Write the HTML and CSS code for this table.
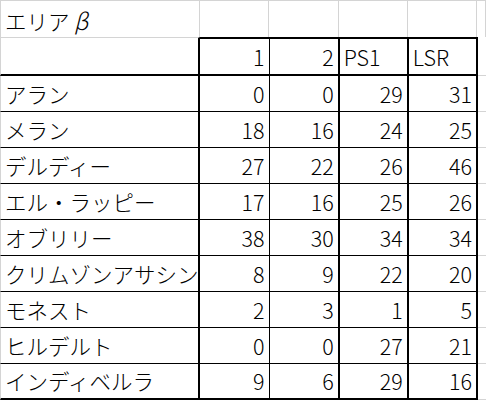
FILE: index.html
```html
<!DOCTYPE html>
<html lang="ja">
<head>
<meta charset="utf-8">
<title>エリアβ</title>
<link rel="stylesheet" href="styles.css">
</head>
<body>
<div class="sheet">
  <div class="row title">
    <div class="cell col-a">エリア<span class="greek">β</span></div>
    <div class="cell col-b"></div>
    <div class="cell col-c"></div>
    <div class="cell col-d"></div>
    <div class="cell col-e"></div>
    <div class="cell col-f"></div>
  </div>
  <div class="row head">
    <div class="cell col-a"></div>
    <div class="cell col-b num">1</div>
    <div class="cell col-c num">2</div>
    <div class="cell col-d">PS1</div>
    <div class="cell col-e">LSR</div>
    <div class="cell col-f"></div>
  </div>
  <div class="row data">
    <div class="cell col-a">アラン</div>
    <div class="cell col-b num">0</div>
    <div class="cell col-c num">0</div>
    <div class="cell col-d num">29</div>
    <div class="cell col-e num">31</div>
    <div class="cell col-f"></div>
  </div>
  <div class="row data">
    <div class="cell col-a">メラン</div>
    <div class="cell col-b num">18</div>
    <div class="cell col-c num">16</div>
    <div class="cell col-d num">24</div>
    <div class="cell col-e num">25</div>
    <div class="cell col-f"></div>
  </div>
  <div class="row data">
    <div class="cell col-a">デルディー</div>
    <div class="cell col-b num">27</div>
    <div class="cell col-c num">22</div>
    <div class="cell col-d num">26</div>
    <div class="cell col-e num">46</div>
    <div class="cell col-f"></div>
  </div>
  <div class="row data">
    <div class="cell col-a">エル・ラッピー</div>
    <div class="cell col-b num">17</div>
    <div class="cell col-c num">16</div>
    <div class="cell col-d num">25</div>
    <div class="cell col-e num">26</div>
    <div class="cell col-f"></div>
  </div>
  <div class="row data">
    <div class="cell col-a">オブリリー</div>
    <div class="cell col-b num">38</div>
    <div class="cell col-c num">30</div>
    <div class="cell col-d num">34</div>
    <div class="cell col-e num">34</div>
    <div class="cell col-f"></div>
  </div>
  <div class="row data">
    <div class="cell col-a">クリムゾンアサシン</div>
    <div class="cell col-b num">8</div>
    <div class="cell col-c num">9</div>
    <div class="cell col-d num">22</div>
    <div class="cell col-e num">20</div>
    <div class="cell col-f"></div>
  </div>
  <div class="row data">
    <div class="cell col-a">モネスト</div>
    <div class="cell col-b num">2</div>
    <div class="cell col-c num">3</div>
    <div class="cell col-d num">1</div>
    <div class="cell col-e num">5</div>
    <div class="cell col-f"></div>
  </div>
  <div class="row data">
    <div class="cell col-a">ヒルデルト</div>
    <div class="cell col-b num">0</div>
    <div class="cell col-c num">0</div>
    <div class="cell col-d num">27</div>
    <div class="cell col-e num">21</div>
    <div class="cell col-f"></div>
  </div>
  <div class="row data last">
    <div class="cell col-a">インディベルラ</div>
    <div class="cell col-b num">9</div>
    <div class="cell col-c num">6</div>
    <div class="cell col-d num">29</div>
    <div class="cell col-e num">16</div>
    <div class="cell col-f"></div>
  </div>
</div>
</body>
</html>
```

FILE: styles.css
```css
html, body {
  margin: 0;
  padding: 0;
  background: #ffffff;
}

body {
  font-family: "Noto Sans CJK JP", "Noto Sans", sans-serif;
  font-size: 21.5px;
  font-weight: 300;
  color: #000000;
}

.sheet {
  width: 486px;
  overflow: hidden;
}

.row {
  display: flex;
}

.cell {
  box-sizing: border-box;
  display: flex;
  align-items: center;
  padding: 0 4px 0 4px;
  white-space: nowrap;
  overflow: hidden;
  line-height: 1;
}

.num {
  justify-content: flex-end;
}

.greek {
  display: inline-block;
  width: 1em;
  text-align: center;
  font-style: italic;
  font-size: 23px;
}

.col-a { width: 203px; border-left: 1px solid #d4d4d4; }
.col-b { width: 70px; }
.col-c { width: 71px; }
.col-d { width: 70px; }
.col-e { width: 70px; }
.col-f { flex: 1; }

/* title row */
.title .cell {
  height: 37px;
  border-top: 1px solid #d4d4d4;
  border-right: 1px solid #d4d4d4;
  padding-top: 3px;
}

/* header row */
.head .cell {
  height: 39px;
  border-bottom: 2px solid #000;
}
.head .col-a {
  border-top: 1px solid #d4d4d4;
  border-right: 2px solid #000;
}
.head .col-b {
  border-top: 2px solid #000;
  border-right: 1px solid #000;
}
.head .col-c,
.head .col-d,
.head .col-e {
  border-top: 2px solid #000;
  border-right: 2px solid #000;
}
.head .col-f {
  border-bottom: 1px solid #d4d4d4;
}

/* data rows */
.data .cell {
  height: 36px;
  border-bottom: 1px solid #000;
}
.data .col-a { border-right: 2px solid #000; }
.data .col-b { border-right: 1px solid #000; }
.data .col-c,
.data .col-d,
.data .col-e { border-right: 2px solid #000; }
.data .col-f { border-bottom: 1px solid #d4d4d4; }

.data.last .cell { border-bottom: 2px solid #000; }
.data.last .col-f { border-bottom: 1px solid #d4d4d4; }
```
